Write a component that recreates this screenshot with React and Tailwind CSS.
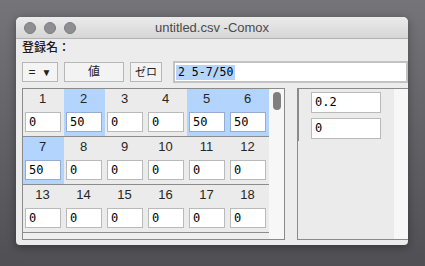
import React from 'react';

const SANS = "font-['Liberation_Sans','Noto_Sans_CJK_JP',sans-serif]";
const MONO = "font-['DejaVu_Sans_Mono',monospace]";

const rows = [
  [
    { n: 1, v: '0' },
    { n: 2, v: '50', sel: true },
    { n: 3, v: '0' },
    { n: 4, v: '0' },
    { n: 5, v: '50', sel: true },
    { n: 6, v: '50', sel: true },
  ],
  [
    { n: 7, v: '50', sel: true },
    { n: 8, v: '0' },
    { n: 9, v: '0' },
    { n: 10, v: '0' },
    { n: 11, v: '0' },
    { n: 12, v: '0' },
  ],
  [
    { n: 13, v: '0' },
    { n: 14, v: '0' },
    { n: 15, v: '0' },
    { n: 16, v: '0' },
    { n: 17, v: '0' },
    { n: 18, v: '0' },
  ],
];

const Cell = ({ n, v, sel }) => (
  <div className={`w-[41px] h-[47px] flex flex-col ${sel ? 'bg-[#b3d5fd]' : ''}`}>
    <div className={`${SANS} mt-[2px] h-[16px] leading-[16px] text-[13px] text-[#262626] text-center pr-[2px]`}>{n}</div>
    <div
      className={`${MONO} mt-[5px] ml-[2px] w-[36px] h-[20px] bg-white border pl-[3px] text-[12px] leading-[18px] text-black ${
        sel ? 'border-[#95add0]' : 'border-[#bababa]'
      }`}
    >
      {v}
    </div>
  </div>
);

const Light = () => (
  <div className="w-[12px] h-[12px] rounded-full bg-[#8f8f93] border border-[#7c7c80]" />
);

export default function App() {
  return (
    <div className="w-[425px] h-[266px] overflow-hidden bg-gradient-to-b from-[#757579] to-[#4f4f54] pt-[17px] pl-[16px]">
      <div className="w-[392px] h-[228px] flex flex-col bg-[#ececec] rounded-t-[5px] rounded-b-[4px] shadow-[0_2px_8px_rgba(0,0,0,0.35)] overflow-hidden">
        {/* Title bar */}
        <div className="h-[22px] flex items-center relative bg-gradient-to-b from-[#ebebeb] to-[#d6d6d6] border-b border-[#b2b2b2]">
          <div className="flex items-center gap-[8px] ml-[8px]">
            <Light />
            <Light />
            <Light />
          </div>
          <div className={`${SANS} absolute inset-0 flex items-center justify-center text-[13px] text-[#4b4b4b]`}>
            untitled.csv -Comox
          </div>
        </div>

        {/* Body */}
        <div className="flex-1 flex flex-col pl-[6px]">
          <div className={`${SANS} mt-[1px] h-[16px] leading-[16px] text-[12px] font-medium text-[#1a1a1a]`}>登録名：</div>

          <div className="mt-[5px] h-[22px] flex items-center">
            <div className={`${SANS} w-[36px] h-[20px] flex items-center justify-center gap-[6px] bg-[#f4f4f4] border border-[#b7b7b7] text-[12px] text-[#222]`}>
              <span>=</span>
              <span className="text-[10px] leading-[10px] mt-[2px]">▼</span>
            </div>
            <div className={`${SANS} ml-[6px] w-[60px] h-[20px] flex items-center justify-center bg-[#f3f3f3] border border-[#b7b7b7] text-[12px] text-[#222]`}>
              値
            </div>
            <div className={`${SANS} ml-[6px] w-[32px] h-[20px] flex items-center justify-center bg-[#f3f3f3] border border-[#b7b7b7] text-[11px] text-[#222]`}>
              ゼロ
            </div>
            <div className={`${MONO} ml-[11px] w-[235px] h-[22px] flex items-center bg-white border-2 border-[#c2c2c2] pl-[1px] text-[11.5px] text-black`}>
              <span className="bg-[#b3d5fd] px-[2px] leading-[15px]">2 5-7/50</span>
            </div>
          </div>

          {/* Panels */}
          <div className="mt-[5px] flex">
            <div className="w-[263px] h-[152px] flex border border-[#8a8a8a] bg-[#ebebeb]">
              <div className="w-[246px] flex flex-col">
                {rows.map((row, i) => (
                  <div key={i} className="flex border-b border-[#8c8c8c]">
                    {row.map((c) => (
                      <Cell key={c.n} {...c} />
                    ))}
                  </div>
                ))}
                <div className="flex-1 bg-[#efefef]" />
              </div>
              <div className="w-[15px] bg-[#f7f7f7] pt-[3px] pl-[4px]">
                <div className="w-[8px] h-[18px] rounded-full bg-[#7f7f7f]" />
              </div>
            </div>

            <div className="ml-[12px] w-[111px] h-[152px] flex border-l border-t border-b border-[#8a8a8a] bg-[#ebebeb]">
              <div className="w-[1px] h-[52px] bg-[#8a8a8a]" />
              <div className="flex-1 flex flex-col pl-[12px] pt-[3px] gap-[5px]">
                <div className={`${MONO} w-[70px] h-[21px] bg-white border border-[#bababa] pl-[3px] text-[12px] leading-[19px] text-black`}>0.2</div>
                <div className={`${MONO} w-[70px] h-[21px] bg-white border border-[#bababa] pl-[3px] text-[12px] leading-[19px] text-black`}>0</div>
              </div>
              <div className="w-[14px] bg-[#f7f7f7]" />
            </div>
          </div>
        </div>
      </div>
    </div>
  );
}
